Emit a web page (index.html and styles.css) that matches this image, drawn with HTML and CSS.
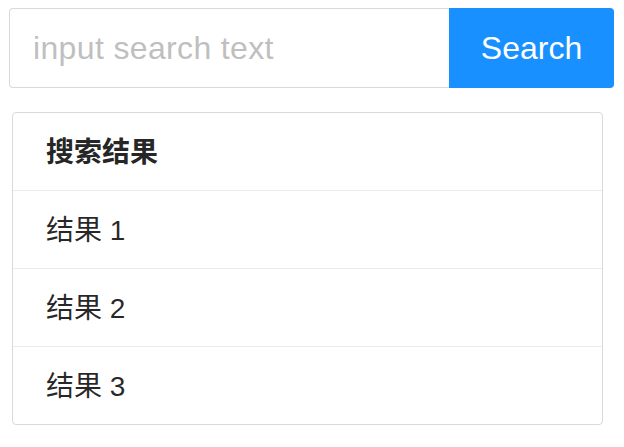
FILE: index.html
```html
<!DOCTYPE html>
<html lang="zh">
<head>
<meta charset="utf-8">
<link rel="stylesheet" href="styles.css">
</head>
<body>
<div class="page">
  <div class="search">
    <input class="search-input" type="text" placeholder="input search text">
    <button class="search-btn" type="button">Search</button>
  </div>
  <div class="list">
    <div class="list-header">搜索结果</div>
    <div class="list-item">结果 1</div>
    <div class="list-item">结果 2</div>
    <div class="list-item">结果 3</div>
  </div>
</div>
</body>
</html>
```
FILE: styles.css
```css
html, body {
  margin: 0;
  background: #fff;
}
.page {
  padding: 8px 10px 0 9px;
  font-family: "Liberation Sans", "Noto Sans CJK SC", sans-serif;
  color: rgba(0, 0, 0, 0.85);
}
.search {
  display: flex;
  height: 80px;
}
.search-input {
  flex: 1;
  min-width: 0;
  box-sizing: border-box;
  height: 80px;
  margin: 0;
  padding: 0 22px 0 23px;
  border: 1px solid #d9d9d9;
  border-right: none;
  border-radius: 4px 0 0 4px;
  font-family: "Liberation Sans", sans-serif;
  font-size: 32px;
  letter-spacing: 0.35px;
  color: rgba(0, 0, 0, 0.85);
  outline: none;
  background: #fff;
}
.search-input::placeholder {
  color: #bfbfbf;
}
.search-btn {
  width: 165px;
  height: 80px;
  margin: 0;
  padding: 0;
  border: none;
  border-radius: 0 4px 4px 0;
  background: #1890ff;
  color: #fff;
  font-family: "Liberation Sans", sans-serif;
  font-size: 32px;
}
.list {
  margin: 24px 11px 0 3px;
  border: 1px solid #d9d9d9;
  border-radius: 4px;
  font-size: 28px;
}
.list-header,
.list-item {
  box-sizing: border-box;
  height: 78px;
  display: flex;
  align-items: center;
  padding: 0 33px 4px;
}
.list-item:last-child {
  height: 77px;
}
.list-header {
  font-weight: 700;
  color: #262626;
}
.list-header,
.list-item:not(:last-child) {
  border-bottom: 1px solid #ebebeb;
}
```
